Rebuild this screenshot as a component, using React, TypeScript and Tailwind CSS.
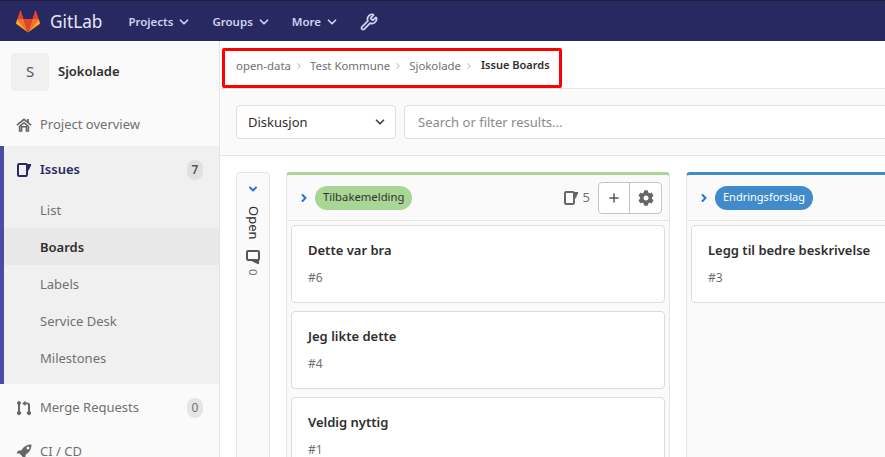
import React from 'react';
import { ChevronDown, ChevronRight, Plus, Wrench } from 'lucide-react';
import { FaCog } from 'react-icons/fa';

function GitlabLogo() {
  return (
    <svg width="24" height="23" viewBox="0 0 26 24">
      <path d="M13 24 L8.2 9.2 H17.8 Z" fill="#e24329" />
      <path d="M13 24 L8.2 9.2 H1.4 Z" fill="#fc6d26" />
      <path d="M1.4 9.2 L0 13.7 C-.1 14.1 0 14.6 .4 14.8 L13 24 Z" fill="#fca326" />
      <path d="M1.4 9.2 H8.2 L5.3 .3 C5.1 -.1 4.6 -.1 4.4 .3 Z" fill="#e24329" />
      <path d="M13 24 L17.8 9.2 H24.6 Z" fill="#fc6d26" />
      <path d="M24.6 9.2 L26 13.7 C26.1 14.1 26 14.6 25.6 14.8 L13 24 Z" fill="#fca326" />
      <path d="M24.6 9.2 H17.8 L20.7 .3 C20.9 -.1 21.4 -.1 21.6 .3 Z" fill="#e24329" />
    </svg>
  );
}

function IssueIcon({ className }: { className?: string }) {
  return (
    <svg width="16" height="16" viewBox="0 0 16 16" fill="none" className={className}>
      <rect x="2" y="2" width="9" height="12" rx="1.2" stroke="currentColor" strokeWidth="2" />
      <path d="M11 2 H14.4 C15.1 2 15.4 2.6 15.1 3.3 L12.6 8.6 H11 Z" fill="currentColor" />
    </svg>
  );
}

function HomeIcon() {
  return (
    <svg width="16" height="16" viewBox="0 0 16 16" className="text-[#666]" fill="currentColor">
      <path d="M8 1.2 L0.4 7.6 L1.4 8.8 L8 3.4 L14.6 8.8 L15.6 7.6 L12.8 5.2 V2 H11 V3.7 Z" />
      <path d="M2.8 9 L8 4.8 L13.2 9 V14.8 H9.6 V10.6 H6.4 V14.8 H2.8 Z M4.4 9.8 V13.2 H4.8 V9 H11.2 V13.2 H11.6 V9.8 L8 6.8 Z" fillRule="evenodd" />
    </svg>
  );
}

function MergeIcon() {
  return (
    <svg width="16" height="16" viewBox="0 0 16 16" fill="#666">
      <path d="M3 1 a2 2 0 0 1 1 3.7 V11.3 a2 2 0 1 1 -2 0 V4.7 A2 2 0 0 1 3 1 Z" />
      <path d="M9.5 0.8 L6.2 3.4 L9.5 6 V4.2 H11 C11.6 4.2 12 4.6 12 5.2 V11.3 a2 2 0 1 0 2 0 V5 C14 3.4 12.8 2.4 11.4 2.4 H9.5 Z" />
    </svg>
  );
}

function RocketIcon() {
  return (
    <svg width="16" height="16" viewBox="0 0 16 16" fill="#666">
      <path d="M15.5 .5 C11 .5 7.5 2.5 5.4 6.2 L2 6.8 L.5 9.4 L3.6 9.6 L6.4 12.4 L6.6 15.5 L9.2 14 L9.8 10.6 C13.5 8.5 15.5 5 15.5 .5 Z M10.5 4 a1.5 1.5 0 1 1 1.5 1.5 a1.5 1.5 0 0 1 -1.5 -1.5 Z" fillRule="evenodd" />
    </svg>
  );
}

function NavItem({ label }: { label: string }) {
  return (
    <div className="flex items-center gap-1 text-[11.5px] font-semibold text-[#d1d1f0]">
      {label}
      <ChevronDown size={14} strokeWidth={3} />
    </div>
  );
}

function SideItem({ icon, label, count }: { icon: React.ReactNode; label: string; count?: string }) {
  return (
    <div className="flex h-11 items-center pl-4 pr-4 pt-[1px] text-[13px] text-[#707070]">
      <span className="mr-2 w-4 shrink-0">{icon}</span>
      <span>{label}</span>
      {count && (
        <span className="ml-auto flex h-5 w-4 items-center justify-center rounded-full bg-[#e5e5e5] text-[12px] text-[#707070]">
          {count}
        </span>
      )}
    </div>
  );
}

function Crumb({ label }: { label: string }) {
  return (
    <>
      <span>{label}</span>
      <ChevronRight size={10} strokeWidth={2} className="ml-[3px] mr-[6px] text-[#a0a0a0]" />
    </>
  );
}

function Card({ title, num }: { title: string; num: string }) {
  return (
    <div className="h-[78px] rounded border border-[#dcdcdc] bg-white px-4 pt-[13px]">
      <div className="text-[13px] leading-[22px] font-semibold text-[#2e2e2e]">{title}</div>
      <div className="mt-[9px] text-[12px] leading-[16px] text-[#707070]">{num}</div>
    </div>
  );
}

export default function App() {
  const subItems = ['List', 'Boards', 'Labels', 'Service Desk', 'Milestones'];

  return (
    <div className="relative flex h-[457px] w-[885px] flex-col overflow-hidden bg-white font-['Noto_Sans',sans-serif]">
      {/* Top nav */}
      <header className="flex h-[41px] shrink-0 items-center border-t border-[#1f1f3d] bg-[#292961] pl-4 pt-[1px]">
        <GitlabLogo />
        <span className="ml-[10px] text-[17.2px] text-[#e6e6f5]">GitLab</span>
        <div className="ml-[26px] flex items-center gap-[21px]">
          <NavItem label="Projects" />
          <NavItem label="Groups" />
          <NavItem label="More" />
          <Wrench size={18} strokeWidth={2.4} className="text-[#d1d1f0]" />
        </div>
      </header>

      <div className="flex min-h-0 flex-1">
        {/* Sidebar */}
        <aside className="w-[220px] shrink-0 border-r border-[#e5e5e5] bg-[#fafafa]">
          <div className="flex h-[61px] items-center pl-[11px]">
            <div className="flex h-[38px] w-[38px] items-center justify-center rounded bg-[#f0f0f0] text-[15px] text-[#555]">S</div>
            <span className="ml-[9px] pt-[1px] text-[13px] font-semibold text-[#2e2e2e]">Sjokolade</span>
          </div>
          <SideItem icon={<HomeIcon />} label="Project overview" />
          <div className="border-l-4 border-[#4b4ba3] bg-[#f0f0f0] pb-2">
            <div className="flex h-[45px] items-center pl-[12px] pr-4 pt-[2px] text-[13px] font-semibold text-[#292961]">
              <IssueIcon className="mr-2 text-[#292961]" />
              <span>Issues</span>
              <span className="ml-auto flex h-5 w-4 items-center justify-center rounded-full bg-[#e0e0e0] text-[12px] text-[#555]">7</span>
            </div>
            {subItems.map((item) => (
              <div
                key={item}
                className={`flex h-[37px] items-center pl-9 pt-[2px] text-[13px] ${
                  item === 'Boards' ? 'bg-[#e8e8e8] font-semibold text-[#2e2e2e]' : 'text-[#707070]'
                }`}
              >
                {item}
              </div>
            ))}
          </div>
          <div className="pt-[1px]">
            <SideItem icon={<MergeIcon />} label="Merge Requests" count="0" />
            <SideItem icon={<RocketIcon />} label="CI / CD" />
          </div>
        </aside>

        {/* Main */}
        <main className="min-w-0 flex-1">
          <div className="flex h-[48px] items-center border-b border-[#e5e5e5] pl-4 pt-[2px] text-[11.4px] text-[#707070]">
            <Crumb label="open-data" />
            <Crumb label="Test Kommune" />
            <Crumb label="Sjokolade" />
            <span className="ml-[1px] text-[11px] font-semibold text-[#2e2e2e]">Issue Boards</span>
          </div>

          <div className="flex h-[67px] items-center gap-2 border-b border-[#e5e5e5] bg-[#fafafa] pl-4">
            <div className="flex h-[34px] w-[160px] shrink-0 items-center justify-between rounded border border-[#dfdfdf] bg-white pl-[11px] pr-[8px] text-[13px] text-[#2e2e2e]">
              <span className="pt-[1px]">Diskusjon</span>
              <ChevronDown size={14} strokeWidth={3} className="text-[#444]" />
            </div>
            <div className="flex h-[34px] w-[500px] shrink-0 items-center rounded border border-[#dfdfdf] bg-white pl-[13px] pt-[1px] text-[13px] text-[#8a8a8a]">
              Search or filter results...
            </div>
          </div>

          {/* Board */}
          <div className="flex gap-4 pl-4 pt-4">
            <div className="flex h-[300px] w-[34px] shrink-0 flex-col items-center rounded border border-[#e5e5e5] bg-[#fafafa] pt-[10px] text-[#2e2e2e]">
              <ChevronDown size={12} strokeWidth={4} className="text-[#1f78d1]" />
              <span className="mt-[11px] text-[13px] leading-none [writing-mode:vertical-rl]">Open</span>
              <IssueIcon className="mt-[9px] rotate-90 text-[#555]" />
              <span className="mt-[4px] text-[11.5px] leading-none text-[#707070] [writing-mode:vertical-rl]">0</span>
            </div>

            <div className="h-[300px] w-[384px] shrink-0 rounded-t border border-t-[3px] border-[#e5e5e5] border-t-[#a8d695] bg-[#fafafa]">
              <div className="flex h-[46px] items-center border-b border-[#e5e5e5] pl-[11px] pr-[7px]">
                <ChevronRight size={12} strokeWidth={4} className="text-[#1f78d1]" />
                <span className="ml-[5px] flex h-6 items-center rounded-full bg-[#a8d695] px-2 text-[11.3px] text-[#333]">Tilbakemelding</span>
                <IssueIcon className="ml-auto -mr-[1px] text-[#666]" />
                <span className="ml-[5px] text-[13px] text-[#707070]">5</span>
                <div className="ml-[8px] flex h-8 rounded border border-[#c4c4c4] bg-white">
                  <div className="flex w-[31px] items-center justify-center border-r border-[#c4c4c4]">
                    <Plus size={14} strokeWidth={2.5} className="text-[#555]" />
                  </div>
                  <div className="flex w-[31px] items-center justify-center">
                    <FaCog size={16} className="text-[#666]" />
                  </div>
                </div>
              </div>
              <div className="flex flex-col gap-2 px-[4px] pt-[4px]">
                <Card title="Dette var bra" num="#6" />
                <Card title="Jeg likte dette" num="#4" />
                <Card title="Veldig nyttig" num="#1" />
              </div>
            </div>

            <div className="h-[300px] w-[384px] shrink-0 rounded-t border border-t-[3px] border-[#e5e5e5] border-t-[#428bca] bg-[#fafafa]">
              <div className="flex h-[46px] items-center border-b border-[#e5e5e5] pl-[11px]">
                <ChevronRight size={12} strokeWidth={4} className="text-[#1f78d1]" />
                <span className="ml-[5px] flex h-6 items-center rounded-full bg-[#428bca] px-2 text-[11px] text-white">Endringsforslag</span>
              </div>
              <div className="px-[4px] pt-[4px]">
                <Card title="Legg til bedre beskrivelse" num="#3" />
              </div>
            </div>
          </div>
        </main>
      </div>

      {/* Annotation box over the breadcrumb */}
      <div className="absolute left-[222px] top-[48px] h-[40px] w-[340px] rounded-[2px] border-[3px] border-[#ff0000]" />
    </div>
  );
}
